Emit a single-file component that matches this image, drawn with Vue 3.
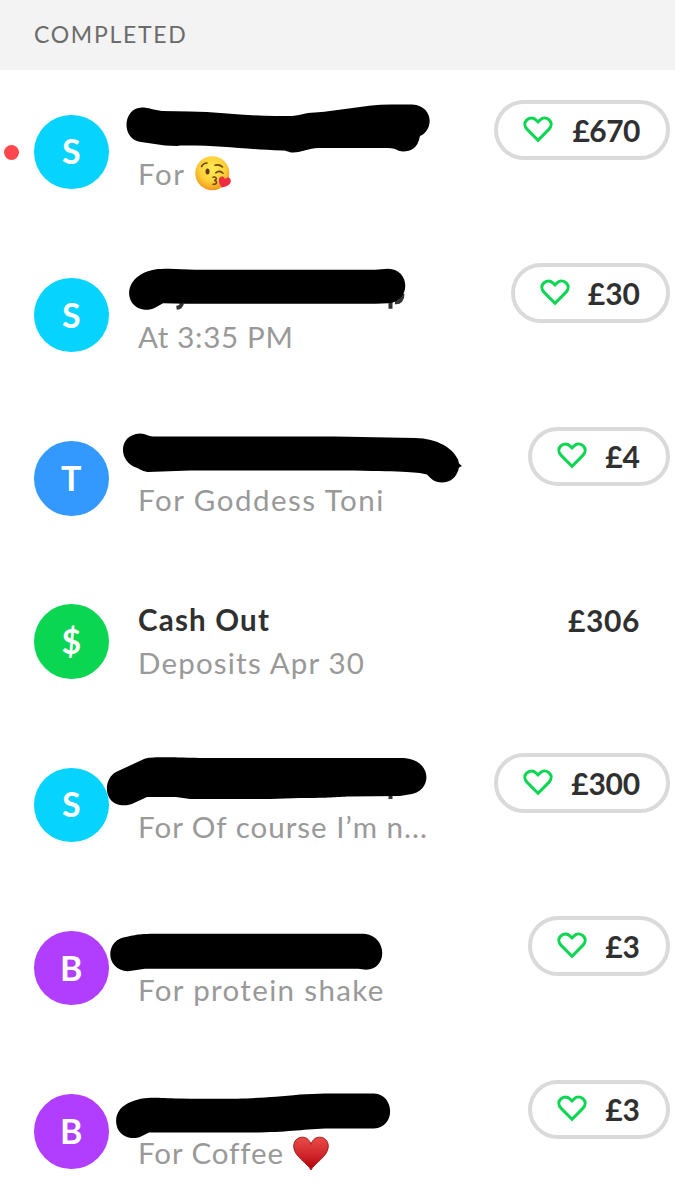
<script setup>
const ROW = 163.25
const HEADER = 70

const rows = [
  {
    letter: 'S', color: 'cyan', unread: true, note: 'For', emoji: 'kiss', amount: '£670', thanks: true, noteGap: 1.6, amountGap: -0.5, width: 176,
    scribble: 'M142 107.5C148 107.5 154 110 162 111L190 111.5C220 112 248 116 275 116H292C304 115 303 113 315 112.5C340 111 365 104.5 390 104.5H412C434 106 434 130 420 136C418 148 411 151.5 403 151.5C398 151.5 396 148 388 148H320C309 147.5 303 152.5 293 152.5C288 152.5 288 150.5 282 150.5C240 149 220 145 180 145.5L177 146L165 145.5L141 142C121 140 122 108 142 107.5Z'
  },
  {
    letter: 'S', color: 'cyan', note: 'At 3:35 PM', amount: '£30', thanks: true, noteGap: 0.7, amountGap: 0, width: 159,
    scribble: 'M144 273C153 269.5 156 269 169 269L195 270H375L388 269C411 269 411 303 388 303.5L376 304H185L163 303.5L155 308C147 312 137 310 132 303C126 294 129 280 144 273Z',
    traces: 'M182 303.5C181 307 180 307.5 176.5 308M390.5 302V309M395 302.5C400 303 402.5 300 402.5 294'
  },
  {
    letter: 'T', color: 'blue', note: 'For Goddess Toni', amount: '£4', thanks: true, noteGap: 1.5, amountGap: 0, width: 142,
    scribble: 'M140 433C146 433 148 436 153 436H335L415 437.5C438 438 453 448 458 459L459 463L462 465.5L459 467C457 477 450 482 442 482C434 482 431 478 427 474C415 471 400 471 345 470H190L148 471.5C143 471 141 469 136 467C118 461 118 434 140 433Z'
  },
  { letter: '$', color: 'green', title: 'Cash Out', note: 'Deposits Apr 30', amount: '£306', noteGap: 1.2, amountGap: 0.6 },
  {
    letter: 'S', color: 'cyan', note: 'For Of course I’m n...', amount: '£300', thanks: true, noteGap: 1, amountGap: -0.2, width: 176,
    scribble: 'M116 772L144 759C150 757 160 757 200 758H404C433 760 433 792 409 794.5L400 796L350 796.5C335 797 330 798 300 798L270 799H190L176 797H147L134 803C126 807 115 806 110 799C104 790 107 777 116 772Z',
    traces: 'M390.5 795V799'
  },
  {
    letter: 'B', color: 'purple', note: 'For protein shake', amount: '£3', thanks: true, noteGap: 1.35, amountGap: 0, width: 142,
    scribble: 'M127 937C142 933.5 145 934 180 934H364C388 936 388 970 366 970L358 969H145L128 971.5C104 970 105 939 127 937Z'
  },
  {
    letter: 'B', color: 'purple', note: 'For Coffee', emoji: 'heart', amount: '£3', thanks: true, noteGap: 0.9, amountGap: 0, width: 142,
    scribble: 'M132 1101C145 1096 150 1097 180 1098C240 1099 260 1098 300 1094L325 1093H374C395 1094 396 1127 374 1128H325C300 1129 285 1132 250 1132H149L141 1136C132 1140 122 1136 118 1129C113 1117 118 1106 132 1101Z'
  }
]

const viewBox = (i) => `0 ${HEADER + i * ROW} 675 ${ROW}`
const amountStyle = (row) => ({
  letterSpacing: row.amountGap + 'px',
  ...(row.width ? { width: row.width + 'px' } : {})
})
</script>

<template>
  <main class="screen">
    <header class="section">COMPLETED</header>
    <article v-for="(row, i) in rows" :key="i" class="row">
      <span v-if="row.unread" class="unread"></span>
      <div class="avatar" :class="row.color"><span>{{ row.letter }}</span></div>
      <div class="details">
        <div class="title">{{ row.title }}</div>
        <div class="note">
          <span :style="{ letterSpacing: row.noteGap + 'px' }">{{ row.note }}</span>
          <svg v-if="row.emoji === 'kiss'" class="kiss" viewBox="0 0 36 36">
            <defs>
              <radialGradient id="face" cx="50%" cy="38%" r="62%">
                <stop offset="0" stop-color="#ffec55" />
                <stop offset=".6" stop-color="#fed039" />
                <stop offset="1" stop-color="#ee981d" />
              </radialGradient>
            </defs>
            <circle cx="17.3" cy="17.2" r="17" fill="url(#face)" />
            <path d="M6.5 10.5Q8.5 7 12 7M20 9.2Q24.5 8 27.5 11M20.8 16.8Q24.5 13.8 28 17.2" fill="none" stroke="#70400b" stroke-width="1.6" stroke-linecap="round" />
            <ellipse cx="12.5" cy="15.6" rx="2" ry="3" fill="#65370b" />
            <path d="M18 21.2C22 20.5 22.5 23.8 19.2 24.5C23 24.8 22 28.8 18 28.3" fill="none" stroke="#70400b" stroke-width="1.5" stroke-linecap="round" />
            <path d="M27 31.5C22.5 27 23 20.5 27 20.5C29.3 20.5 30 23.3 30 23.3C32.3 20 36.3 21.8 35.8 25.5C35.2 29 31.5 30.5 27 31.5Z" fill="#ed2e42" />
          </svg>
          <svg v-if="row.emoji === 'heart'" class="red-heart" viewBox="0 0 36 34">
            <defs>
              <linearGradient id="red" x1="0" y1="0" x2="0" y2="1">
                <stop offset="0" stop-color="#ea4b49" />
                <stop offset=".55" stop-color="#d0262b" />
                <stop offset="1" stop-color="#ae0005" />
              </linearGradient>
            </defs>
            <path d="M18 33.5C15 27 1 20 .7 10C.7 4 4.8.7 9.5.7C14 .7 16.8 4 18 8C19.2 4 22 .7 26.5.7C31.2.7 35.3 4 35.3 10C35 20 21 27 18 33.5Z" fill="url(#red)" stroke="#a0191d" stroke-width="1" />
          </svg>
        </div>
      </div>
      <div class="amount" :class="{ pill: row.thanks }" :style="amountStyle(row)">
        <svg v-if="row.thanks" class="heart" viewBox="0 0 30 27">
          <path d="M15 24.3L4.2 13.4C1.2 10.2 1.2 6.5 3.6 4.1C6.4 1.3 10.3 1.3 13 4L15 6L17 4C19.7 1.3 23.6 1.3 26.4 4.1C28.8 6.5 28.8 10.2 25.8 13.4Z" />
        </svg>
        <span>{{ row.amount }}</span>
      </div>
      <svg v-if="row.scribble" class="redaction" :viewBox="viewBox(i)">
        <path v-if="row.traces" :d="row.traces" class="trace" />
        <path :d="row.scribble" />
      </svg>
    </article>
  </main>
</template>

<style>
body { background: #fff; overflow: hidden; }
</style>

<style scoped>
.screen {
  width: 675px;
  height: 1200px;
  overflow: hidden;
  background: #fff;
  font-family: Lato, "Liberation Sans", sans-serif;
}
.section {
  box-sizing: border-box;
  height: 70px;
  padding-left: 34px;
  background: #f3f3f3;
  color: #6b6b6b;
  font-size: 23px;
  line-height: 69px;
  letter-spacing: 1.7px;
}
.row {
  position: relative;
  display: flex;
  box-sizing: border-box;
  height: 163.25px;
  padding: 30px 5px 0 34px;
}
.unread {
  position: absolute;
  left: 4px;
  top: 74.5px;
  width: 15px;
  height: 15px;
  border-radius: 50%;
  background: #ff474d;
}
.avatar {
  display: flex;
  align-items: center;
  justify-content: center;
  flex: none;
  width: 74.5px;
  height: 74.5px;
  margin-top: 14.5px;
  border-radius: 50%;
  color: #fff;
  font-size: 34px;
  font-weight: 700;
  line-height: 40px;
}
.avatar span { margin-top: -1px; }
.cyan { background: #07d3ff; }
.blue { background: #3399ff; }
.green { background: #0bd651; }
.purple { background: #b13eff; }
.details { flex: 1; min-width: 0; margin-left: 29.5px; }
.title {
  height: 43px;
  padding-top: 10px;
  box-sizing: border-box;
  color: #303030;
  font-size: 29.5px;
  font-weight: 700;
  line-height: 40px;
  letter-spacing: 1.2px;
  white-space: nowrap;
}
.note {
  display: flex;
  align-items: center;
  height: 40px;
  margin-top: 10.5px;
  color: #999;
  font-size: 29.5px;
  line-height: 40px;
  white-space: pre;
}
.kiss { width: 36px; height: 36px; margin-left: 9px; }
.red-heart { width: 36px; height: 35px; margin-left: 9px; }
.amount {
  display: flex;
  align-items: center;
  justify-content: flex-end;
  box-sizing: border-box;
  height: 59.5px;
  padding-right: 30px;
  color: #303030;
  font-size: 30px;
  font-weight: 700;
  line-height: 40px;
  flex: none;
}
.pill {
  justify-content: space-between;
  padding: 0 26px 0 25px;
  border: 4px solid #dadada;
  border-radius: 30px;
}
.heart {
  width: 30px;
  height: 27px;
  margin-top: -1px;
  fill: none;
  stroke: #0bd651;
  stroke-width: 3;
  stroke-linejoin: miter;
}
.redaction {
  position: absolute;
  left: 0;
  top: 0;
  width: 675px;
  height: 163.25px;
  overflow: visible;
  fill: #000;
}
.trace { fill: none; stroke: #333; stroke-width: 4; }
</style>
